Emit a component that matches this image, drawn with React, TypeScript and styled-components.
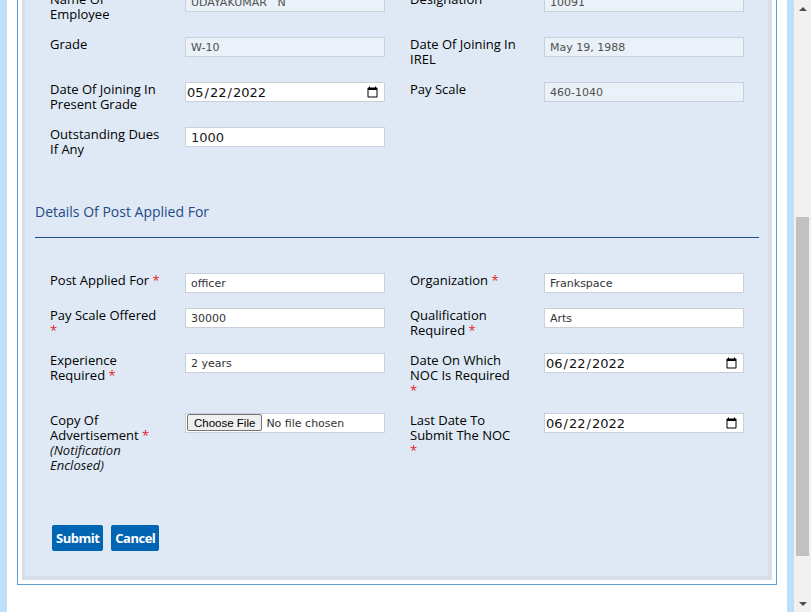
import React, { useLayoutEffect, useRef } from "react";
import styled, { createGlobalStyle } from "styled-components";

const GlobalStyle = createGlobalStyle`
  html, body { margin: 0; padding: 0; background: #fff; overflow: hidden; }
  body { font-family: "Open Sans", "DejaVu Sans", sans-serif; }
  * { box-sizing: border-box; }
`;

const Page = styled.div`
  display: flex;
  width: 811px;
  height: 612px;
`;

const Viewport = styled.div`
  flex: 1;
  height: 100%;
  overflow: hidden;
`;

const Frame = styled.div`
  border-left: 7px solid #bcdffb;
  border-right: 7px solid #bcdffb;
  padding: 10px 10px 80px;
  background: #fff;
`;

const Box = styled.div`
  border: 1px solid #5ba0d6;
  padding: 4px;
  background: #fff;
`;

const Panel = styled.div`
  display: flex;
  flex-direction: column;
  background: #dee9f5;
  border-style: solid;
  border-color: #d5dee9;
  border-width: 3px 4px 4px 3px;
  padding: 15px 9px 25px 10px;
`;

const FieldGrid = styled.div`
  display: flex;
  flex-direction: column;
  padding: 0 15px;
`;

const Row = styled.div`
  display: grid;
  grid-template-columns: 1fr 1fr;
  column-gap: 24px;
  margin-bottom: 15px;
  align-items: start;
`;

const Field = styled.div`
  display: grid;
  grid-template-columns: 1fr 200px;
  align-items: start;
`;

const Label = styled.div<{ $textWidth: number; $shift: number }>`
  width: ${(p) => p.$textWidth}px;
  margin-left: ${(p) => p.$shift}px;
  font: 400 13px/15px "Open Sans", sans-serif;
  color: #000;
`;

const Req = styled.span`
  color: #e31b1b;
`;

const Hint = styled.span`
  display: block;
  font-style: italic;
  color: #111;
`;

const TextInput = styled.input<{ $large?: boolean }>`
  width: 200px;
  height: 20px;
  margin: 0;
  border: 1px solid #c8d0d9;
  border-radius: 0;
  background: ${(p) => (p.readOnly ? "#eaf1f9" : "#fff")};
  font-family: "DejaVu Sans", Verdana, sans-serif;
  font-size: ${(p) => (p.$large ? "13px" : "11px")};
  color: ${(p) => (p.readOnly ? "#505050" : p.$large ? "#222" : "#333")};
  padding: 0 5px;
  outline: none;
`;

const DateInput = styled.input`
  width: 200px;
  height: 20px;
  margin: 0;
  border: 1px solid #c8d0d9;
  border-radius: 0;
  background: #fff;
  font-family: "DejaVu Sans", Verdana, sans-serif;
  font-size: 13px;
  color: #111;
  padding: 0 3px 0 0;
  outline: none;
`;

const FileInput = styled.input`
  width: 200px;
  height: 20px;
  margin: 0;
  border: 1px solid #c8d0d9;
  background: #fff;
  font-family: "DejaVu Sans", Verdana, sans-serif;
  font-size: 11px;
  line-height: 17px;
  color: #333;
  padding: 0;
  outline: none;

  &::file-selector-button {
    height: 17px;
    margin: 0 4px 0 1px;
    padding: 0 6px;
    border: 1px solid #767676;
    border-radius: 2px;
    background: #efefef;
    color: #000;
    font-family: "Liberation Sans", Arial, sans-serif;
    font-size: 11.5px;
  }
`;

const SectionTitle = styled.h3`
  margin: 30px 0 0;
  font: 400 14px/20px "Open Sans", sans-serif;
  color: #254a86;
`;

const Divider = styled.hr`
  width: 100%;
  margin: 15px 0 35px;
  height: 0;
  border: 0;
  border-top: 1px solid #1f4c8d;
`;

const Actions = styled.div`
  display: flex;
  gap: 8px;
  margin-top: 37px;
  padding-left: 17px;
`;

const Button = styled.button`
  height: 26px;
  padding: 0 4px;
  border: 0;
  border-radius: 2px;
  background: #0066b3;
  color: #fff;
  font: 700 13px/26px "Open Sans", sans-serif;
  letter-spacing: -0.5px;
  cursor: pointer;
`;

const ScrollBar = styled.div`
  width: 17px;
  height: 100%;
  flex-shrink: 0;
  background: #f1f1f1;
  display: flex;
  flex-direction: column;
`;

const ArrowButton = styled.div`
  height: 17px;
  display: flex;
  align-items: center;
  justify-content: center;
`;

const Track = styled.div`
  flex: 1;
  display: flex;
  flex-direction: column;
  align-items: center;
`;

const Thumb = styled.div<{ $offset: number; $size: number }>`
  margin-top: ${(p) => p.$offset}px;
  height: ${(p) => p.$size}px;
  width: 13px;
  background: #c1c1c1;
`;

type Control =
  | { kind: "text"; value: string; readOnly?: boolean; large?: boolean }
  | { kind: "date"; value: string }
  | { kind: "file" };

type FieldDef = {
  label: string;
  required?: boolean;
  hint?: string;
  control: Control;
};

type RowDef = [FieldDef, FieldDef | null];

const employeeRows: RowDef[] = [
  [
    { label: "Name Of Employee", control: { kind: "text", value: "UDAYAKUMAR   N", readOnly: true } },
    { label: "Designation", control: { kind: "text", value: "10091", readOnly: true } },
  ],
  [
    { label: "Grade", control: { kind: "text", value: "W-10", readOnly: true } },
    { label: "Date Of Joining In IREL", control: { kind: "text", value: "May 19, 1988", readOnly: true } },
  ],
  [
    { label: "Date Of Joining In Present Grade", control: { kind: "date", value: "2022-05-22" } },
    { label: "Pay Scale", control: { kind: "text", value: "460-1040", readOnly: true } },
  ],
  [{ label: "Outstanding Dues If Any", control: { kind: "text", value: "1000", large: true } }, null],
];

const postRows: RowDef[] = [
  [
    { label: "Post Applied For", required: true, control: { kind: "text", value: "officer" } },
    { label: "Organization", required: true, control: { kind: "text", value: "Frankspace" } },
  ],
  [
    { label: "Pay Scale Offered", required: true, control: { kind: "text", value: "30000" } },
    { label: "Qualification Required", required: true, control: { kind: "text", value: "Arts" } },
  ],
  [
    { label: "Experience Required", required: true, control: { kind: "text", value: "2 years" } },
    { label: "Date On Which NOC Is Required", required: true, control: { kind: "date", value: "2022-06-22" } },
  ],
  [
    {
      label: "Copy Of Advertisement",
      required: true,
      hint: "(Notification Enclosed)",
      control: { kind: "file" },
    },
    { label: "Last Date To Submit The NOC", required: true, control: { kind: "date", value: "2022-06-22" } },
  ],
];

function renderControl(c: Control) {
  if (c.kind === "date") return <DateInput type="date" defaultValue={c.value} />;
  if (c.kind === "file") return <FileInput type="file" />;
  return <TextInput type="text" defaultValue={c.value} readOnly={c.readOnly} $large={c.large} />;
}

function FieldCell({ def, textWidth, shift }: { def: FieldDef | null; textWidth: number; shift: number }) {
  if (!def) return <div />;
  return (
    <Field>
      <Label $textWidth={textWidth} $shift={shift}>
        {def.label}
        {def.required && (
          <>
            {" "}
            <Req>*</Req>
          </>
        )}
        {def.hint && <Hint>{def.hint}</Hint>}
      </Label>
      {renderControl(def.control)}
    </Field>
  );
}

function Rows({ rows, firstRef }: { rows: RowDef[]; firstRef?: React.Ref<HTMLDivElement> }) {
  return (
    <FieldGrid>
      {rows.map((r, i) => (
        <Row key={i} ref={i === 0 ? firstRef : undefined}>
          <FieldCell def={r[0]} textWidth={112} shift={0} />
          <FieldCell def={r[1]} textWidth={106} shift={1} />
        </Row>
      ))}
    </FieldGrid>
  );
}

function ArrowIcon({ up }: { up?: boolean }) {
  return (
    <svg width="8" height="4" viewBox="0 0 8 4" aria-hidden="true">
      <polygon points={up ? "0,4 8,4 4,0" : "0,0 8,0 4,4"} fill="#505050" />
    </svg>
  );
}

export default function App() {
  const viewportRef = useRef<HTMLDivElement>(null);
  const firstRowRef = useRef<HTMLDivElement>(null);

  useLayoutEffect(() => {
    const vp = viewportRef.current;
    const row = firstRowRef.current;
    if (!vp || !row) return;
    vp.scrollTop = 0;
    const offset = row.getBoundingClientRect().top - vp.getBoundingClientRect().top;
    vp.scrollTop = offset + 8;
  }, []);

  return (
    <>
      <GlobalStyle />
      <Page>
        <Viewport ref={viewportRef}>
          <Frame>
            <Box>
              <Panel>
                <Rows rows={employeeRows} firstRef={firstRowRef} />
                <SectionTitle>Details Of Post Applied For</SectionTitle>
                <Divider />
                <Rows rows={postRows} />
                <Actions>
                  <Button type="button">Submit</Button>
                  <Button type="button">Cancel</Button>
                </Actions>
              </Panel>
            </Box>
          </Frame>
        </Viewport>
        <ScrollBar>
          <ArrowButton>
            <ArrowIcon up />
          </ArrowButton>
          <Track>
            <Thumb $offset={200} $size={339} />
          </Track>
          <ArrowButton>
            <ArrowIcon />
          </ArrowButton>
        </ScrollBar>
      </Page>
    </>
  );
}
